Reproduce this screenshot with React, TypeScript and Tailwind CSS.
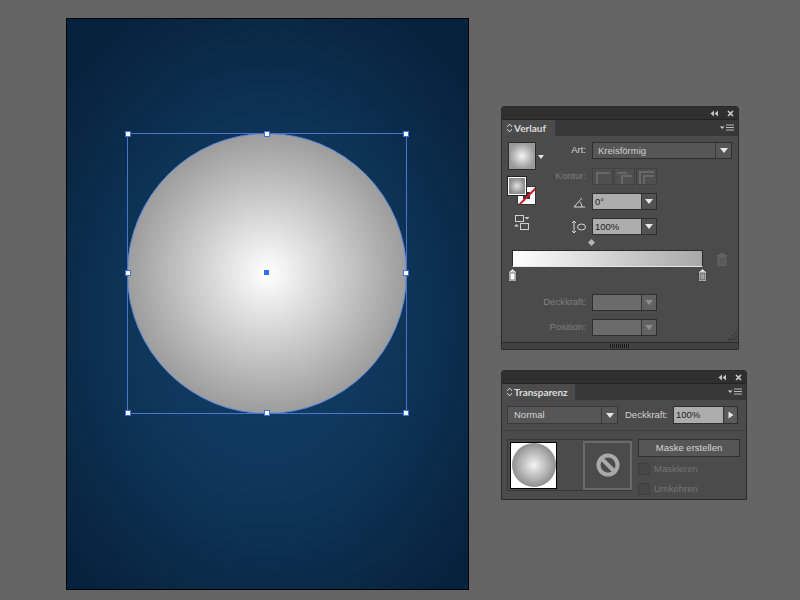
import React from 'react';

const font = { fontFamily: '"Liberation Sans", Arial, sans-serif' };

const TitleIcons = () => (
  <div className="flex items-center justify-end gap-[9px] h-full pr-[4px]">
    <svg width="8" height="7" viewBox="0 0 8 7"><path d="M4 0.5 L0.5 3.5 L4 6.5Z M8 0.5 L4.5 3.5 L8 6.5Z" fill="#c4c4c4" /></svg>
    <svg width="7" height="7" viewBox="0 0 7 7"><path d="M1 1 L6 6 M6 1 L1 6" stroke="#d0d0d0" strokeWidth="1.6" /></svg>
  </div>
);

const PanelMenu = () => (
  <svg width="14" height="8" viewBox="0 0 14 8" className="mr-[4px]">
    <path d="M0 2.5 H4.5 L2.25 5Z" fill="#d0d0d0" />
    <path d="M6 1 H14 M6 3.5 H14 M6 6 H14" stroke="#b8b8b8" strokeWidth="1" />
  </svg>
);

const TabArrows = () => (
  <svg width="7" height="10" viewBox="0 0 7 10" className="mr-[1px] shrink-0">
    <path d="M1 4 L3.5 1 L6 4 M1 6 L3.5 9 L6 6" stroke="#d4d4d4" strokeWidth="1" fill="none" />
  </svg>
);

const Arrow = ({ color = '#e6e6e6' }: { color?: string }) => (
  <svg width="8" height="5" viewBox="0 0 8 5"><path d="M0 0 H8 L4 5Z" fill={color} /></svg>
);

const PanelHead = ({ title, tabW }: { title: string; tabW: string }) => (
  <>
    <div className="h-[12px] bg-[#2f2f2f] rounded-t-[2px]">
      <TitleIcons />
    </div>
    <div className="h-[17px] bg-[#383838] flex items-center justify-between border-t border-[#222]">
      <div className={`${tabW} h-full bg-[#4b4b4b] flex items-center pl-[4px] text-[10px] font-bold whitespace-nowrap text-[#dcdcdc] [font-family:Lato,sans-serif]`}>
        <TabArrows />
        {title}
      </div>
      <PanelMenu />
    </div>
  </>
);

const Label = ({ children, off }: { children: string; off?: boolean }) => (
  <div className={`w-[33px] flex justify-end text-[9.5px] whitespace-nowrap ${off ? 'text-[#7f7f7f]' : 'text-[#d4d4d4]'}`}>
    {children}
  </div>
);

const NumberField = ({ value, off }: { value?: string; off?: boolean }) => (
  <div className={`flex w-[65px] h-[17px] border border-[#2e2e2e] ${off ? 'bg-[#6b6b6b]' : 'bg-[#adadad]'}`}>
    <div className="flex-1 pl-[2px] text-[9.5px] leading-[15px] text-[#222]">{value}</div>
    <div className={`w-[15px] flex items-center justify-center border-l border-[#333] ${off ? 'bg-[#626262]' : 'bg-[#525252]'}`}>
      <Arrow color={off ? '#8e8e8e' : '#e6e6e6'} />
    </div>
  </div>
);

const CornerBtn = ({ d }: { d: string }) => (
  <div className="w-[21px] h-[17px] bg-[#4f4f4f] border border-[#424242] flex items-center justify-center">
    <svg width="17" height="14" viewBox="0 0 17 14"><path d={d} fill="none" stroke="#686868" strokeWidth="2" /></svg>
  </div>
);

const GradientStop = ({ fill }: { fill: string }) => (
  <svg width="9" height="14" viewBox="0 0 9 14">
    <path d="M4.5 0.5 L8.5 4 V13.5 H0.5 V4Z" fill="#d8d8d8" stroke="#2e2e2e" strokeWidth="0.8" />
    <rect x="2" y="5" width="5" height="7" fill={fill} stroke="#333" strokeWidth="0.6" />
  </svg>
);

const GradientPanel = () => (
  <div className="absolute left-[501px] top-[106px] w-[238px] h-[244px] bg-[#4b4b4b] border border-[#2a2a2a] rounded-t-[3px] flex flex-col text-[#d4d4d4]">
    <PanelHead title="Verlauf" tabW="w-[53px]" />
    <div className="flex pl-[6px] pt-[6px]">
      {/* left swatches */}
      <div className="w-[45px] flex flex-col shrink-0">
        <div className="flex items-end">
          <div className="w-[28px] h-[28px] border border-[#2a2a2a] bg-[radial-gradient(circle_closest-side,#f4f4f4_0%,#9a9a9a_100%)]" />
          <div className="ml-[2px] mb-[11px]">
            <svg width="6" height="4" viewBox="0 0 6 4"><path d="M0 0 H6 L3 4Z" fill="#e6e6e6" /></svg>
          </div>
        </div>
        <div className="relative h-[28px] mt-[7px]">
          <div className="absolute left-[9px] top-[9px] w-[19px] h-[19px] bg-white border border-[#333] overflow-hidden flex items-center justify-center">
            <div className="w-[7px] h-[7px] bg-[#333]" />
            <svg className="absolute inset-0" width="19" height="19" viewBox="0 0 19 19"><path d="M0 19 L19 0" stroke="#d0202a" strokeWidth="2" /></svg>
          </div>
          <div className="absolute left-0 top-0 w-[18px] h-[18px] border border-white outline outline-[#222] bg-[radial-gradient(circle_closest-side,#e2e2e2_0%,#8b8b8b_100%)]" />
        </div>
        <svg width="16" height="15" viewBox="0 0 16 15" className="ml-[6px] mt-[10px]">
          <rect x="1.5" y="0.5" width="8" height="6" fill="none" stroke="#d0d0d0" />
          <path d="M10.5 2 H15.5 L13 4.5Z" fill="#d0d0d0" />
          <rect x="6.5" y="8.5" width="8" height="6" fill="none" stroke="#d0d0d0" />
          <path d="M0 11.5 H5 L2.5 9Z" fill="#d0d0d0" />
        </svg>
      </div>
      {/* right fields */}
      <div className="flex flex-col">
        <div className="flex items-center gap-[6px] h-[17px]">
          <Label>Art:</Label>
          <div className="w-[140px] h-[17px] flex bg-[#565656] border border-[#2e2e2e]">
            <div className="flex-1 pl-[5px] text-[9.5px] leading-[15px] text-[#d0d0d0]">Kreisförmig</div>
            <div className="w-[16px] flex items-center justify-center border-l border-[#3a3a3a]"><Arrow /></div>
          </div>
        </div>
        <div className="flex items-center gap-[6px] h-[17px] mt-[9px]">
          <Label off>Kontur:</Label>
          <div className="flex gap-px">
            <CornerBtn d="M16 3 H3 V14" />
            <CornerBtn d="M16 6 H6 V14 M1 3 H11" />
            <CornerBtn d="M16 2 H2 V14 M16 6 H6 V14" />
          </div>
        </div>
        <div className="flex items-center gap-[6px] h-[17px] mt-[8px]">
          <div className="w-[33px] flex justify-end">
            <svg width="13" height="12" viewBox="0 0 13 12"><path d="M12 11 H1 L9 2 M7 6 Q9 8 9 11" fill="none" stroke="#d6d6d6" strokeWidth="1" /></svg>
          </div>
          <NumberField value="0°" />
        </div>
        <div className="flex items-center gap-[6px] h-[17px] mt-[8px]">
          <div className="w-[33px] flex justify-end">
            <svg width="15" height="14" viewBox="0 0 15 14"><path d="M3 1 V13 M1 3 L3 1 L5 3 M1 11 L3 13 L5 11" fill="none" stroke="#d6d6d6" /><ellipse cx="10.5" cy="7" rx="4" ry="3" fill="none" stroke="#d6d6d6" /></svg>
          </div>
          <NumberField value="100%" />
        </div>
      </div>
    </div>
    {/* gradient slider */}
    <div className="ml-[10px] w-[224px]">
      <div className="h-[15px] pl-[77px] flex items-center">
        <div className="w-[5px] h-[5px] rotate-45 bg-[#b5b5b5]" />
      </div>
      <div className="flex items-start">
        <div className="w-[191px] h-[17px] border border-[#2a2a2a] border-b-[#e4e4e4] bg-[linear-gradient(90deg,#ffffff,#a8a8a8)]" />
        <svg width="12" height="13" viewBox="0 0 12 13" className="ml-[13px] mt-[3px]">
          <path d="M1 2.5 H11 M4 2 V0.8 H8 V2 M2 3.5 H10 V12.5 H2Z" fill="#5a5a5a" stroke="#646464" />
        </svg>
      </div>
      <div className="w-[199px] -ml-[4px] flex justify-between mt-[1px]">
        <GradientStop fill="#ffffff" />
        <GradientStop fill="#a0a0a0" />
      </div>
    </div>
    {/* disabled fields */}
    <div className="ml-[51px] mt-[12px] flex flex-col gap-[8px]">
      <div className="flex items-center gap-[6px]"><Label off>Deckkraft:</Label><NumberField off /></div>
      <div className="flex items-center gap-[6px]"><Label off>Position:</Label><NumberField off /></div>
    </div>
    {/* resize corner and grip */}
    <div className="flex justify-end pr-[1px] -mt-[5px] h-[10px]">
      <svg width="10" height="10" viewBox="0 0 10 10"><path d="M9 1 V9 M6 4 V9 M3 7 V9 M1 9 H9" stroke="#222" strokeDasharray="1 1" /></svg>
    </div>
    <div className="flex-1 mt-[1px] border-t border-[#2a2a2a] bg-[#414141] flex items-center justify-center">
      <div className="w-[20px] h-[4px] bg-[repeating-linear-gradient(90deg,#161616_0,#161616_1px,#4a4a4a_1px,#4a4a4a_2px)]" />
    </div>
  </div>
);

const TransparencyPanel = () => (
  <div className="absolute left-[501px] top-[370px] w-[246px] h-[130px] bg-[#4b4b4b] border border-[#2a2a2a] rounded-t-[3px] flex flex-col text-[#d4d4d4]">
    <PanelHead title="Transparenz" tabW="w-[73px]" />
    <div className="flex items-center px-[5px] pt-[6px] pb-[6px] border-b border-[#404040]">
      <div className="w-[111px] h-[18px] flex bg-[#565656] border border-[#3a3a3a]">
        <div className="flex-1 pl-[6px] text-[9.5px] leading-[16px]">Normal</div>
        <div className="w-[16px] flex items-center justify-center border-l border-[#3a3a3a]"><Arrow /></div>
      </div>
      <div className="ml-[7px] text-[9.5px] w-[44px] whitespace-nowrap">Deckkraft:</div>
      <div className="ml-[4px] w-[65px] h-[18px] flex border border-[#2e2e2e] bg-[#adadad]">
        <div className="flex-1 pl-[2px] text-[9.5px] leading-[16px] text-[#222]">100%</div>
        <div className="w-[14px] bg-[#5a5a5a] flex items-center justify-center border-l border-[#333]">
          <svg width="6" height="8" viewBox="0 0 6 8"><path d="M0.5 0.5 L5.5 4 L0.5 7.5Z" fill="#e6e6e6" /></svg>
        </div>
      </div>
    </div>
    <div className="flex pl-[5px] pt-[8px]">
      <div className="w-[125px] h-[52px] border border-[#363636] flex items-center pl-[2px]">
        <div className="w-[47px] h-[47px] bg-white border border-black flex items-center justify-center shrink-0">
          <div className="w-[44px] h-[44px] rounded-full bg-[radial-gradient(circle_closest-side,#f4f4f4_0%,#8f8f8f_100%)]" />
        </div>
        <div className="w-[49px] h-[49px] ml-[26px] border-2 border-[#6a6a6a] flex items-center justify-center shrink-0">
          <svg width="24" height="24" viewBox="0 0 24 24"><circle cx="12" cy="12" r="9.5" fill="none" stroke="#a9a9a9" strokeWidth="4" /><path d="M5.5 5.5 L18.5 18.5" stroke="#a9a9a9" strokeWidth="4" /></svg>
        </div>
      </div>
      <div className="ml-[6px] flex flex-col">
        <div className="w-[102px] h-[18px] bg-[#565656] border border-[#303030] text-center text-[9.5px] leading-[16px]">Maske erstellen</div>
        <div className="flex items-center mt-[6px] h-[12px]">
          <div className="w-[12px] h-[12px] bg-[#474747] border border-[#3e3e3e]" />
          <span className="ml-[4px] text-[9.5px] text-[#757575]">Maskieren</span>
        </div>
        <div className="flex items-center mt-[8px] h-[12px]">
          <div className="w-[12px] h-[12px] bg-[#474747] border border-[#3e3e3e]" />
          <span className="ml-[4px] text-[9.5px] text-[#757575]">Umkehren</span>
        </div>
      </div>
    </div>
  </div>
);

const Handle = ({ className }: { className: string }) => (
  <div className={`absolute w-[6px] h-[6px] bg-white border border-[#3f6fe0] ${className}`} />
);

const Artboard = () => (
  <div className="absolute left-[66px] top-[18px] w-[403px] h-[572px] border border-black bg-[radial-gradient(ellipse_265px_350px_at_200px_300px,#124068_0%,#0e3659_50%,#07223d_100%)]">
    <div className="absolute left-[60px] top-[114px] w-[280px] h-[281px] rounded-full border border-[#5b86e0] bg-[radial-gradient(circle_closest-side,#ffffff_0%,#9d9d9d_100%)]" />
    {/* selection box */}
    <div className="absolute left-[60px] top-[114px] w-[280px] h-[281px] border border-[#4a74d0]">
      <Handle className="-left-[3px] -top-[3px]" />
      <Handle className="left-[136px] -top-[3px]" />
      <Handle className="-right-[3px] -top-[3px]" />
      <Handle className="-left-[3px] top-[136px]" />
      <Handle className="-right-[3px] top-[136px]" />
      <Handle className="-left-[3px] -bottom-[3px]" />
      <Handle className="left-[136px] -bottom-[3px]" />
      <Handle className="-right-[3px] -bottom-[3px]" />
      <div className="absolute left-[136px] top-[136px] w-[5px] h-[5px] bg-[#2f6ff0]" />
    </div>
  </div>
);

export default function App() {
  return (
    <div className="relative w-[800px] h-[600px] overflow-hidden bg-[#646464]" style={font}>
      <Artboard />
      <GradientPanel />
      <TransparencyPanel />
    </div>
  );
}
